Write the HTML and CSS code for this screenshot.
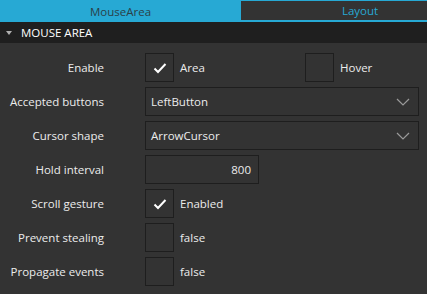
FILE: index.html
```html
<!DOCTYPE html>
<html>
<head>
<meta charset="utf-8">
<link rel="stylesheet" href="styles.css">
</head>
<body>
<div class="tabs">
  <div class="tab active">MouseArea</div>
  <div class="tab other">Layout</div>
</div>
<div class="section">
  <span class="arrow"></span>
  <span class="section-title">MOUSE AREA</span>
</div>
<div class="grid">
  <div class="label">Enable</div>
  <div class="value pair">
    <div class="check-item">
      <span class="box"><svg width="14" height="12" viewBox="0 0 14 12"><path d="M1.5 6.5 L5 10 L12.5 2" fill="none" stroke="#ffffff" stroke-width="2"/></svg></span>
      <span class="ctext">Area</span>
    </div>
    <div class="check-item">
      <span class="box"></span>
      <span class="ctext">Hover</span>
    </div>
  </div>

  <div class="label">Accepted buttons</div>
  <div class="value">
    <div class="combo"><span>LeftButton</span><svg class="chev" width="14" height="8" viewBox="0 0 14 8"><path d="M1 1 L7 7 L13 1" fill="none" stroke="#9a9a9a" stroke-width="1.2"/></svg></div>
  </div>

  <div class="label">Cursor shape</div>
  <div class="value">
    <div class="combo"><span>ArrowCursor</span><svg class="chev" width="14" height="8" viewBox="0 0 14 8"><path d="M1 1 L7 7 L13 1" fill="none" stroke="#9a9a9a" stroke-width="1.2"/></svg></div>
  </div>

  <div class="label">Hold interval</div>
  <div class="value">
    <div class="spin">800</div>
  </div>

  <div class="label">Scroll gesture</div>
  <div class="value">
    <div class="check-item">
      <span class="box"><svg width="14" height="12" viewBox="0 0 14 12"><path d="M1.5 6.5 L5 10 L12.5 2" fill="none" stroke="#ffffff" stroke-width="2"/></svg></span>
      <span class="ctext">Enabled</span>
    </div>
  </div>

  <div class="label">Prevent stealing</div>
  <div class="value">
    <div class="check-item">
      <span class="box"></span>
      <span class="ctext">false</span>
    </div>
  </div>

  <div class="label">Propagate events</div>
  <div class="value">
    <div class="check-item">
      <span class="box"></span>
      <span class="ctext">false</span>
    </div>
  </div>
</div>
</body>
</html>
```
FILE: styles.css
```css
html, body {
  margin: 0;
  padding: 0;
  background: #333333;
  width: 427px;
  height: 294px;
  overflow: hidden;
  font-family: "Open Sans", "DejaVu Sans", sans-serif;
  font-size: 11.5px;
  color: #ececec;
}
.tabs {
  display: flex;
  height: 22px;
  background: #27a9d4;
  overflow: hidden;
}
.tab {
  display: flex;
  align-items: center;
  justify-content: center;
  box-sizing: border-box;
  flex-shrink: 0;
}
.tab.active {
  width: 241px;
  color: #2b3f48;
  background: #27a9d4;
}
.tab.other {
  width: 238px;
  margin: 1px 0 2px 0;
  background: #333333;
  color: #27a9d4;
}
.section {
  height: 21px;
  background: #1f1f1f;
  display: flex;
  align-items: center;
  padding-left: 6px;
}
.arrow {
  width: 0;
  height: 0;
  border-left: 3.5px solid transparent;
  border-right: 3.5px solid transparent;
  border-top: 4px solid #b0b0b0;
  margin-right: 9px;
}
.section-title {
  color: #ffffff;
}
.grid {
  display: grid;
  grid-template-columns: 104px 1fr;
  column-gap: 41px;
  row-gap: 5px;
  padding: 10px 8px 0 0;
}
.label {
  height: 29px;
  display: flex;
  align-items: center;
  justify-content: flex-end;
}
.value {
  display: flex;
  align-items: center;
  height: 29px;
}
.pair .check-item:first-child {
  width: 160px;
}
.check-item {
  display: flex;
  align-items: center;
}
.box {
  width: 29px;
  height: 29px;
  box-sizing: border-box;
  border: 1px solid #1e1e1e;
  display: flex;
  align-items: center;
  justify-content: center;
}
.ctext {
  margin-left: 6px;
}
.combo {
  box-sizing: border-box;
  width: 274px;
  height: 29px;
  border: 1px solid #1e1e1e;
  display: flex;
  align-items: center;
  justify-content: space-between;
  padding: 0 8px 0 5px;
}
.chev {
  margin-top: 1px;
}
.spin {
  box-sizing: border-box;
  width: 114px;
  height: 29px;
  border: 1px solid #1e1e1e;
  display: flex;
  align-items: center;
  justify-content: flex-end;
  padding-right: 7px;
}
```
